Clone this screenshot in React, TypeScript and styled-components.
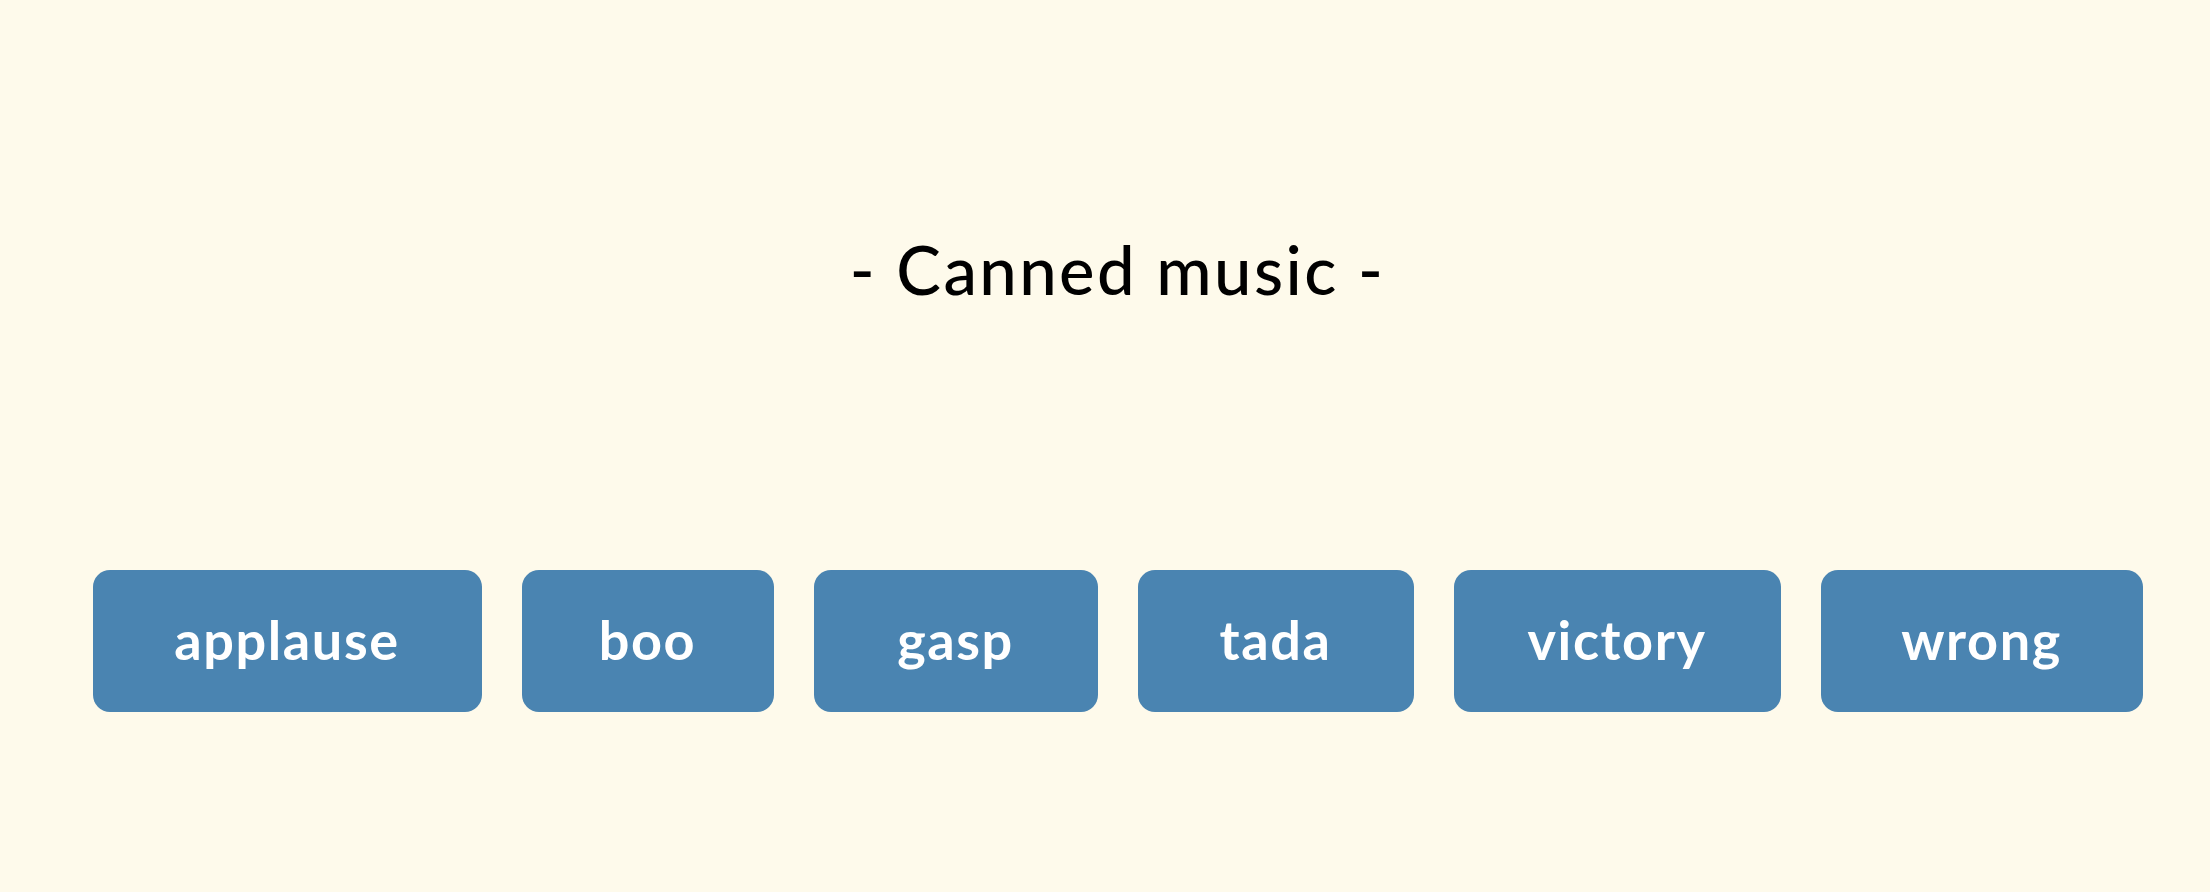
import React from "react";
import styled, { createGlobalStyle } from "styled-components";

const GlobalStyle = createGlobalStyle`
  html, body {
    margin: 0;
    padding: 0;
    background: #fefaeb;
  }
  body {
    font-family: "Lato", "Noto Sans", sans-serif;
  }
`;

const Page = styled.main`
  min-height: 892px;
  box-sizing: border-box;
  padding: 0 0 0 25px;
  display: flex;
  flex-direction: column;
  align-items: center;
  background: #fefaeb;
`;

const Title = styled.h1`
  margin: 229px 0 0;
  font-family: "Lato", "Noto Sans", sans-serif;
  font-size: 67px;
  line-height: 1.2;
  font-weight: 500;
  letter-spacing: 2.4px;
  color: #000;
`;

const ButtonRow = styled.div`
  margin-top: 261px;
  display: flex;
  gap: 40px;
`;

const SoundButton = styled.button<{ $width: number }>`
  width: ${(p) => p.$width}px;
  height: 142px;
  padding: 0 0 3px;
  box-sizing: border-box;
  border: none;
  border-radius: 17px;
  background: #4a84b1;
  color: #fff;
  font-family: "Lato", "Noto Sans", sans-serif;
  font-size: 54px;
  font-weight: 700;
  letter-spacing: 1.6px;
  display: flex;
  align-items: center;
  justify-content: center;
  cursor: pointer;
`;

const sounds = [
  { name: "applause", width: 389 },
  { name: "boo", width: 252 },
  { name: "gasp", width: 284 },
  { name: "tada", width: 276 },
  { name: "victory", width: 327 },
  { name: "wrong", width: 322 },
];

export default function App() {
  return (
    <>
      <GlobalStyle />
      <Page>
        <Title>- Canned music -</Title>
        <ButtonRow>
          {sounds.map((s) => (
            <SoundButton key={s.name} $width={s.width}>
              {s.name}
            </SoundButton>
          ))}
        </ButtonRow>
      </Page>
    </>
  );
}
